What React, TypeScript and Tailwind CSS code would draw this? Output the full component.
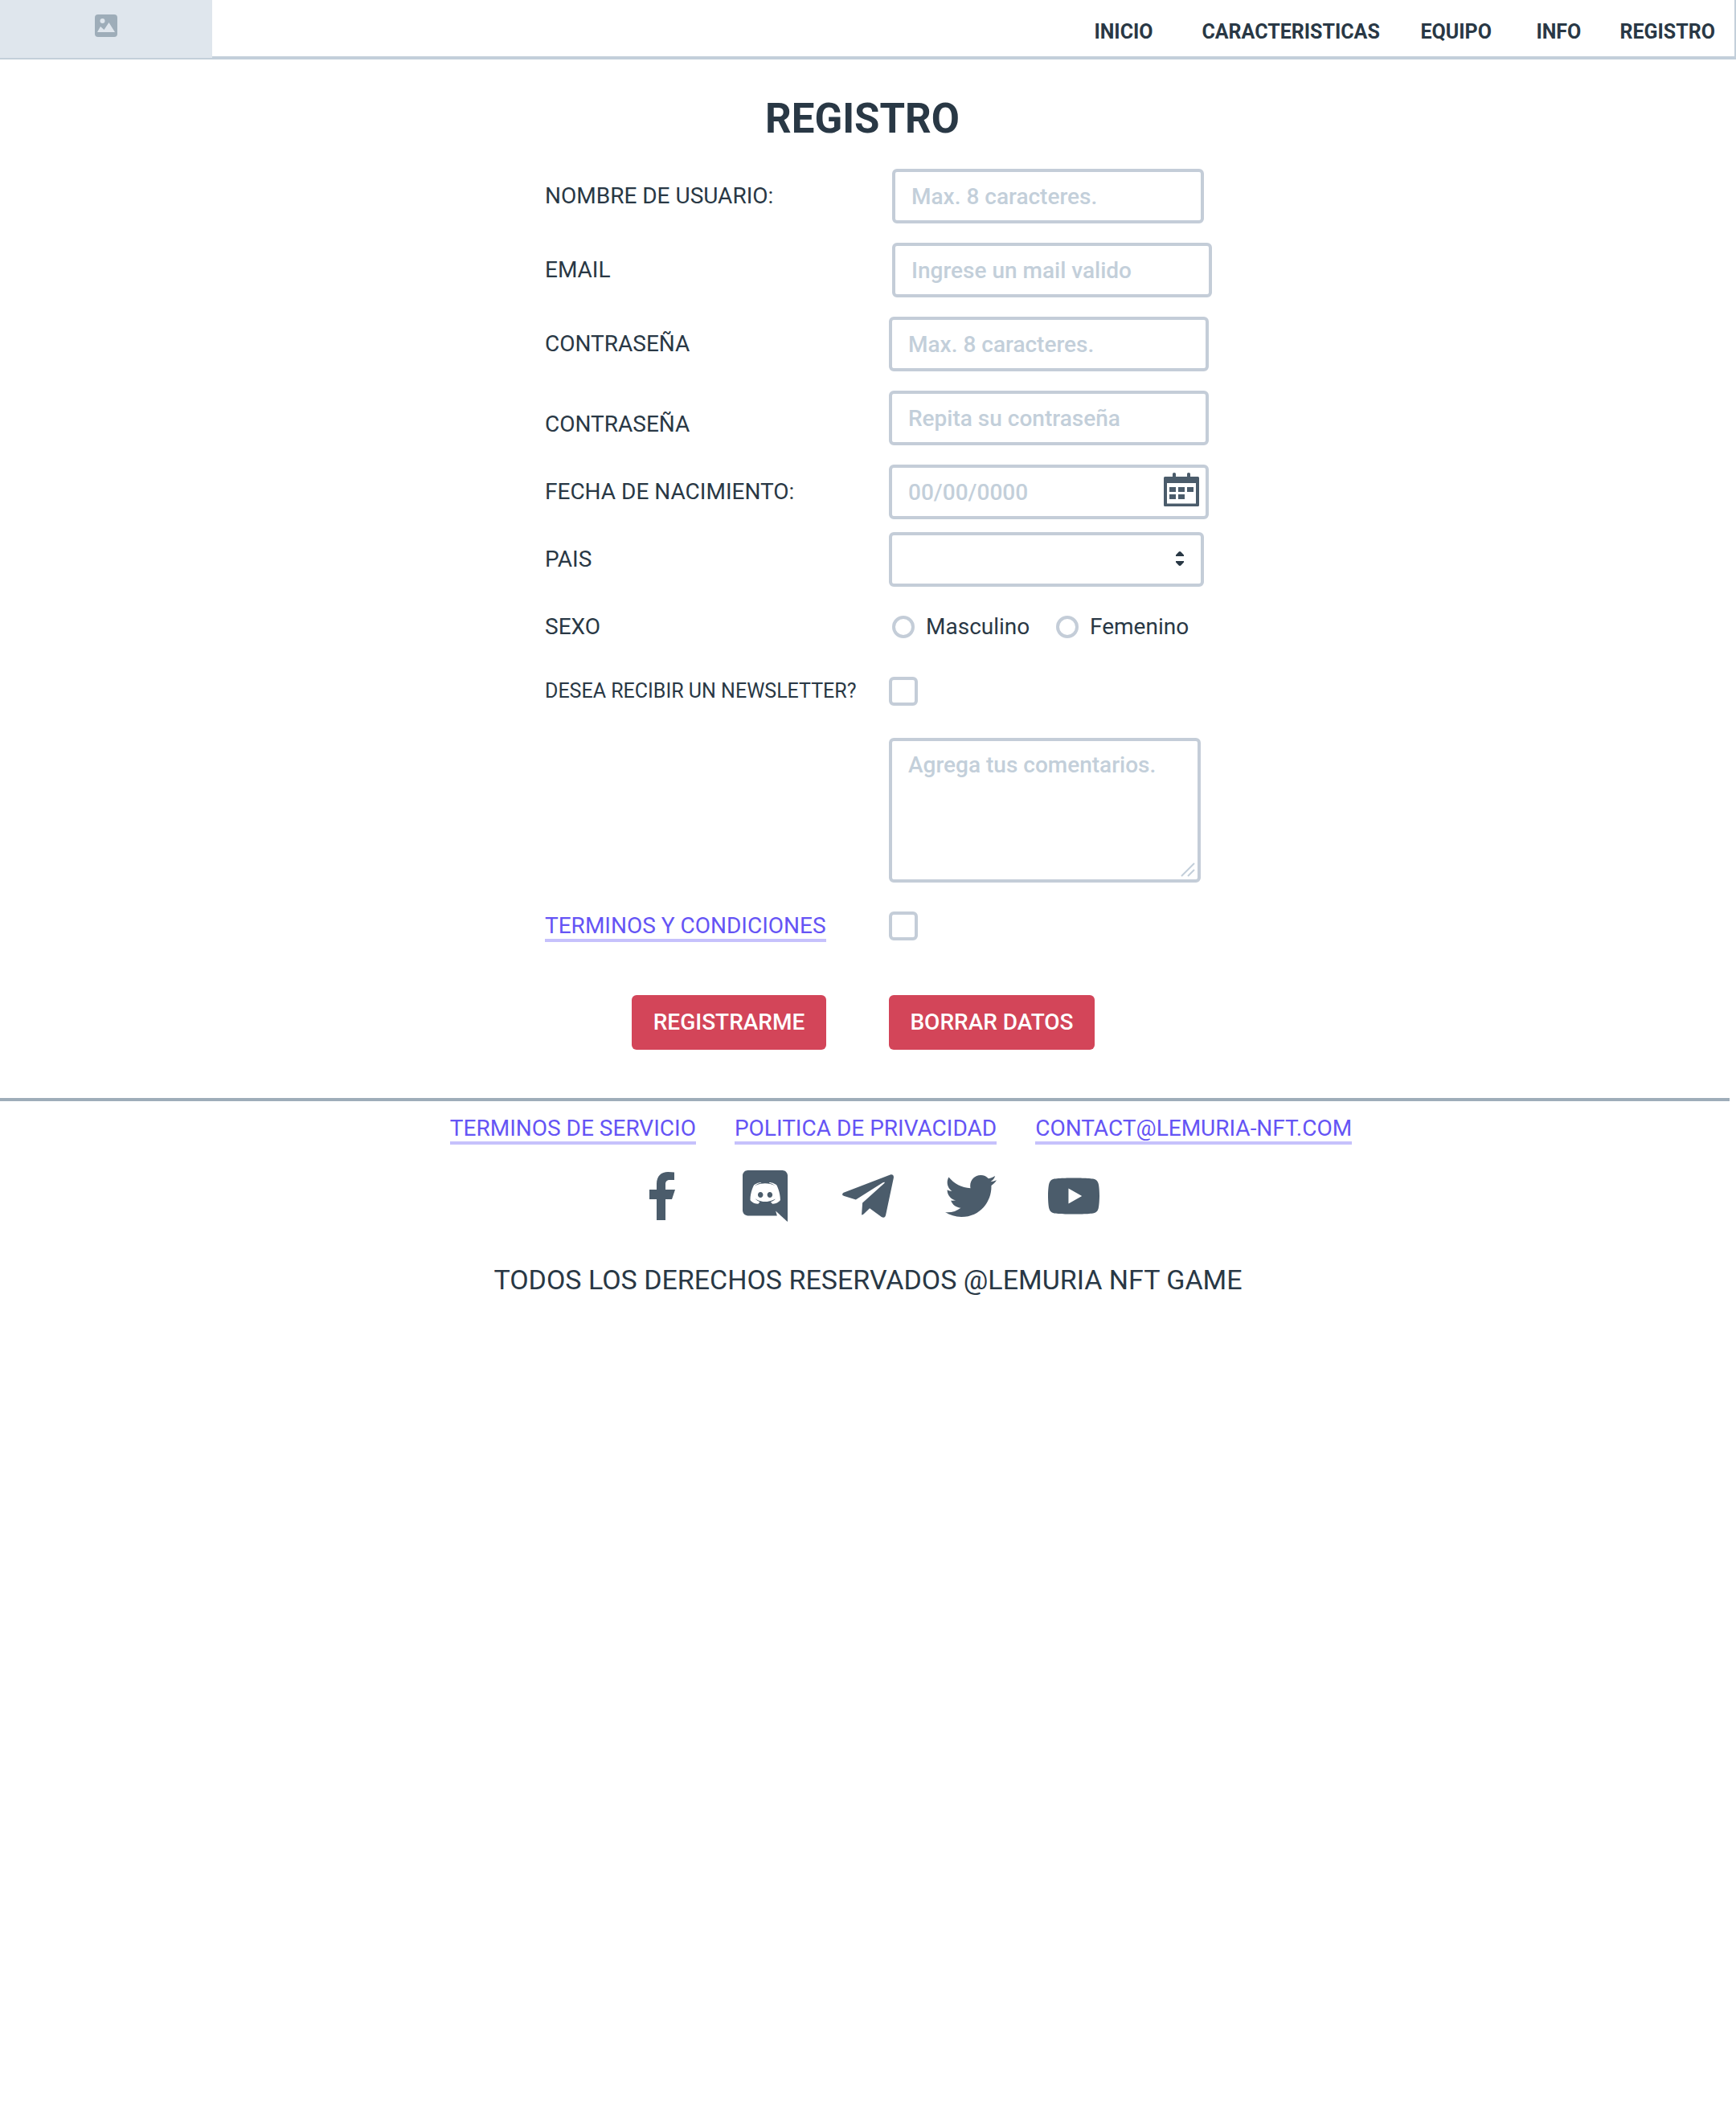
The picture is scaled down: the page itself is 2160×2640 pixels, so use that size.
import type { ReactNode } from "react";
import { FaTelegramPlane, FaTwitter } from "react-icons/fa";
import { SiYoutube } from "react-icons/si";

const navItems = ["INICIO", "CARACTERISTICAS", "EQUIPO", "INFO", "REGISTRO"];

const footerLinks = ["TERMINOS DE SERVICIO", "POLITICA DE PRIVACIDAD", "CONTACT@LEMURIA-NFT.COM"];

const field =
  "h-[68px] rounded-md border-4 border-[#c4cdd8] bg-transparent px-5 text-[28px] font-medium outline-none placeholder:text-[#c3cfda] placeholder:opacity-100";
const check =
  "block h-9 w-9 shrink-0 appearance-none rounded-md border-4 border-[#c4cdd8] checked:bg-[#4b5c6b]";
const link = "border-b-4 border-[#c6c1fc] text-[28px] leading-8 text-[#6554f5]";

function PictureIcon() {
  return (
    <svg viewBox="0 0 28 28" className="h-7 w-7" aria-hidden="true">
      <rect width="28" height="28" rx="4" fill="#9eadb9" />
      <circle cx="9.500" cy="8" r="3" fill="#dfe6ed" />
      <path d="M3 22 7 15 11.500 19 17.500 10 25 22Z" fill="#dfe6ed" />
    </svg>
  );
}

function CalendarIcon() {
  return (
    <svg viewBox="0 0 44 42" className="h-[42px] w-11" aria-hidden="true">
      <path
        fill="#4b5c6b"
        fillRule="evenodd"
        d="M11 5V1.500Q11 0 13 0T15 1.500V5H29V1.500Q29 0 31 0T33 1.500V5H42.500Q44 5 44 6.500V40.500Q44 42 42.500 42H1.500Q0 42 0 40.500V6.500Q0 5 1.500 5ZM4 13V38.500H40V13Z"
      />
      <path fill="#4b5c6b" d="M7 18h8v6H7zM18 18h8v6h-8zM29 18h8v6h-8zM7 27h8v6H7zM18 27h8v6h-8z" />
    </svg>
  );
}

function FacebookIcon() {
  return (
    <svg viewBox="0 0 32 60" className="h-[60px] w-8" aria-hidden="true">
      <path
        fill="currentColor"
        d="M9 60V34H0V22H9V15C9 5 15 0 23 0Q28 0 31 .500V10H25.500C21 10 20 12.500 20 15.500V22H32L28 34H20V60Z"
      />
    </svg>
  );
}

function DiscordIcon() {
  return (
    <svg viewBox="0 0 448 512" className="h-16 w-14" aria-hidden="true">
      <path
        fill="currentColor"
        d="M297.216 243.2c0 15.616-11.52 28.16-26.112 28.16-14.336 0-26.112-12.544-26.112-28.16s11.52-28.16 26.112-28.16c14.592 0 26.112 12.544 26.112 28.16zm-119.552-28.16c-14.592 0-26.112 12.544-26.112 28.16s11.776 28.16 26.112 28.16c14.592 0 26.112-12.544 26.112-28.16.256-15.616-11.52-28.16-26.112-28.16zM448 52.736V512c-64.494-56.994-43.868-38.128-118.784-107.776l13.568 47.36H52.48C23.552 451.584 0 428.032 0 398.848V52.736C0 23.552 23.552 0 52.48 0h343.04C424.448 0 448 23.552 448 52.736zm-72.96 242.688c0-82.432-36.864-149.248-36.864-149.248-36.864-27.648-71.936-26.88-71.936-26.88l-3.584 4.096c43.52 13.312 63.744 32.512 63.744 32.512-60.811-33.329-132.244-33.335-191.232-7.424-9.472 4.352-15.104 7.424-15.104 7.424s21.248-20.224 67.328-33.536l-2.56-3.072s-35.072-.768-71.936 26.88c0 0-36.864 66.816-36.864 149.248 0 0 21.504 37.12 78.08 38.912 0 0 9.472-11.52 17.152-21.248-32.512-9.728-44.8-30.208-44.8-30.208 3.766 2.636 9.976 6.053 10.496 6.4 43.21 24.198 104.588 32.126 159.744 8.96 8.96-3.328 18.944-8.192 29.44-15.104 0 0-12.8 20.992-46.336 30.464 7.68 9.728 16.896 20.736 16.896 20.736 56.576-1.792 78.336-38.912 78.336-38.912z"
      />
    </svg>
  );
}

function Label({ htmlFor, children, className = "" }: { htmlFor: string; children: ReactNode; className?: string }) {
  return (
    <label htmlFor={htmlFor} className={`text-[28px] leading-8 ${className}`}>
      {children}
    </label>
  );
}

const row = "grid grid-cols-[428px_1fr] items-center";

const socials: { name: string; icon: ReactNode }[] = [
  { name: "Facebook", icon: <FacebookIcon /> },
  { name: "Discord", icon: <DiscordIcon /> },
  { name: "Telegram", icon: <FaTelegramPlane className="h-[73px] w-16 shrink-0" /> },
  { name: "Twitter", icon: <FaTwitter className="h-16 w-16" /> },
  { name: "YouTube", icon: <SiYoutube className="h-16 w-16" /> },
];

export default function App() {
  return (
    <div className="min-h-screen bg-white font-['Roboto',sans-serif] text-[#293845]">
      <header className="flex h-[74px] justify-between border-r-2 border-b-4 border-[#c3cfda]">
        <div className="flex h-[72px] w-[264px] justify-center bg-[#dfe6ed] pt-[18px]">
          <PictureIcon />
        </div>
        <nav className="grid grid-cols-[134px_272px_144px_104px_auto] items-center pt-2.5 pr-6">
          {navItems.map((item) => (
            <a key={item} href="#" className="text-[25px] leading-8 font-bold">
              {item}
            </a>
          ))}
        </nav>
      </header>

      <main className="mx-auto w-full max-w-[856px] pl-[26px]">
        <h1 className="pt-[42px] pr-10 text-center text-[51px] leading-[64px] font-bold">REGISTRO</h1>
        <form className="pt-[30px]" onSubmit={(e) => e.preventDefault()}>
          <div className="flex flex-col gap-6">
            <div className={row}>
              <Label htmlFor="user">NOMBRE DE USUARIO:</Label>
              <input id="user" type="text" placeholder="Max. 8 caracteres." className={`${field} ml-1 w-[388px]`} />
            </div>
            <div className={row}>
              <Label htmlFor="email">EMAIL</Label>
              <input id="email" type="email" placeholder="Ingrese un mail valido" className={`${field} ml-1 w-[398px]`} />
            </div>
            <div className={row}>
              <Label htmlFor="pass">CONTRASEÑA</Label>
              <input id="pass" type="password" placeholder="Max. 8 caracteres." className={`${field} w-[398px]`} />
            </div>
            <div className={row}>
              <Label htmlFor="pass2" className="pt-4">CONTRASEÑA</Label>
              <input id="pass2" type="password" placeholder="Repita su contraseña" className={`${field} w-[398px]`} />
            </div>
            <div className={row}>
              <Label htmlFor="birth">FECHA DE NACIMIENTO:</Label>
              <div className="relative w-[398px]">
                <input id="birth" type="text" placeholder="00/00/0000" className={`${field} block w-full`} />
                <button type="button" aria-label="Abrir calendario" className="absolute top-2.5 right-3">
                  <CalendarIcon />
                </button>
              </div>
            </div>
          </div>

          <div className={`${row} mt-4`}>
            <Label htmlFor="country">PAIS</Label>
            <div className="relative w-[392px]">
              <select id="country" className={`${field} block w-full appearance-none`}>
                <option value=""></option>
              </select>
              <svg viewBox="0 0 10 18" className="pointer-events-none absolute top-6 right-[25px] h-[18px] w-2.5" aria-hidden="true">
                <path
                  fill="#293845"
                  d="M0 6V4.500L3.500 .700Q5-.700 6.500 .700L10 4.500V6ZM0 12V13.500L3.500 17.300Q5 18.700 6.500 17.300L10 13.500V12Z"
                />
              </svg>
            </div>
          </div>

          <div className={`${row} mt-[34px]`} role="radiogroup" aria-labelledby="sex-label">
            <span id="sex-label" className="text-[28px] leading-8">SEXO</span>
            <div className="grid grid-cols-[204px_auto] justify-start pl-1">
              {["Masculino", "Femenino"].map((option) => (
                <label key={option} className="flex items-center gap-3.5 text-[28px] leading-8">
                  <input
                    type="radio"
                    name="sex"
                    className="h-7 w-7 shrink-0 appearance-none rounded-full border-4 border-[#c4cdd8] checked:bg-[#4b5c6b]"
                  />
                  {option}
                </label>
              ))}
            </div>
          </div>

          <div className={`${row} mt-[46px]`}>
            <label htmlFor="news" className="text-[25px] leading-8">DESEA RECIBIR UN NEWSLETTER?</label>
            <input id="news" type="checkbox" className={check} />
          </div>

          <div className="mt-10 pl-[428px]">
            <div className="relative w-[388px]">
              <textarea
                aria-label="Comentarios"
                placeholder="Agrega tus comentarios."
                className="block h-[180px] w-full resize-none rounded-md border-4 border-[#c4cdd8] bg-transparent px-5 py-3.5 text-[28px] leading-8 font-medium outline-none placeholder:text-[#c3cfda] placeholder:opacity-100"
              />
              <svg viewBox="0 0 18 18" className="pointer-events-none absolute right-[7px] bottom-[7px] h-[18px] w-[18px]" aria-hidden="true">
                <path d="M1 17 17 1M9 17 17 9" stroke="#c3cfda" strokeWidth="2" fill="none" />
              </svg>
            </div>
          </div>

          <div className={`${row} mt-[34px]`}>
            <div className="flex pt-1">
              <a href="#" className={link}>TERMINOS Y CONDICIONES</a>
            </div>
            <input type="checkbox" aria-label="Acepto los terminos y condiciones" className={check} />
          </div>

          <div className={`${row} mt-[66px]`}>
            <div className="flex justify-end pr-[78px]">
              <button type="submit" className="h-[68px] w-[242px] rounded-md bg-[#d34559] text-[28px] font-medium text-white">
                REGISTRARME
              </button>
            </div>
            <button type="reset" className="h-[68px] w-[256px] rounded-md bg-[#d34559] text-[28px] font-medium text-white">
              BORRAR DATOS
            </button>
          </div>
        </form>
      </main>

      <footer className="mt-[60px]">
        <div className="mr-2 h-1 bg-[#9eadb9]" />
        <div className="flex justify-center gap-12 pt-[18px] pl-[82px]">
          {footerLinks.map((text) => (
            <a key={text} href="#" className={link}>
              {text}
            </a>
          ))}
        </div>
        <div className="flex justify-center gap-16 pt-8 text-[#4b5c6b]">
          {socials.map(({ name, icon }) => (
            <a key={name} href="#" aria-label={name} className="flex h-16 w-16 items-center justify-center">
              {icon}
            </a>
          ))}
        </div>
        <p className="pt-[52px] text-center text-[34px] leading-10">TODOS LOS DERECHOS RESERVADOS @LEMURIA NFT GAME</p>
      </footer>
    </div>
  );
}
